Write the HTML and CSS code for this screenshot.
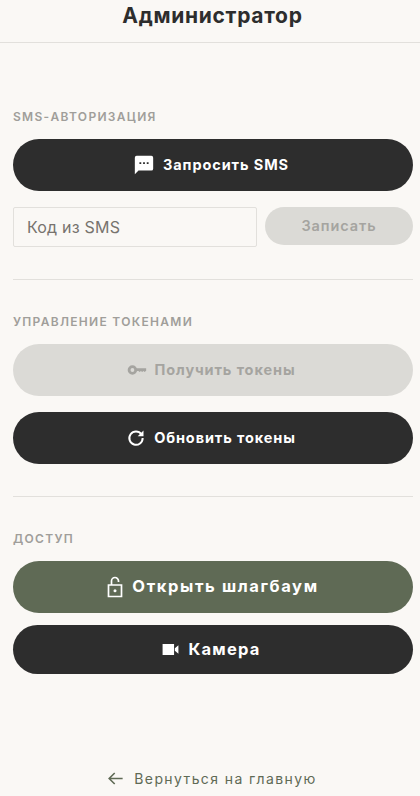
FILE: index.html
```html
<!DOCTYPE html>
<html lang="ru">
<head>
    <meta charset="UTF-8">
    <meta name="viewport" content="width=device-width, initial-scale=1.0">
    <title>Администратор</title>
    <link rel="stylesheet" href="styles.css">
</head>
<body>
    <header class="top-bar">
        <h1>Администратор</h1>
    </header>

    <main class="content">
        <section class="block">
            <h2 class="block-label">SMS-авторизация</h2>
            <button class="btn btn-dark">
                <svg class="icon icon-chat" viewBox="0 0 24 24"><path fill="currentColor" d="M20 2H4a2 2 0 0 0-2 2v18l4-4h14a2 2 0 0 0 2-2V4a2 2 0 0 0-2-2zM9 11H7V9h2v2zm4 0h-2V9h2v2zm4 0h-2V9h2v2z"/></svg>
                Запросить SMS
            </button>
            <div class="code-row">
                <input class="code-input" type="text" placeholder="Код из SMS">
                <button class="btn btn-write" disabled>Записать</button>
            </div>
        </section>

        <section class="block">
            <h2 class="block-label">Управление токенами</h2>
            <button class="btn btn-disabled" disabled>
                <svg class="icon icon-key" viewBox="0 0 24 24"><circle cx="6.500" cy="12" r="4" fill="none" stroke="currentColor" stroke-width="3.400"/><path fill="currentColor" d="M11 10h12v2.800l-1.800 1.700-1.500-1.400-1.500 1.400-1.500-1.400-1.500 1.400-1.500-1.400H11z"/></svg>
                Получить токены
            </button>
            <button class="btn btn-dark">
                <svg class="icon icon-refresh" viewBox="0 0 24 24"><path fill="none" stroke="currentColor" stroke-width="2.400" d="M18.500 7.500A8 8 0 1 0 20 12"/><path fill="currentColor" d="M21 3v7h-7z"/></svg>
                Обновить токены
            </button>
        </section>

        <section class="block block-access">
            <h2 class="block-label">Доступ</h2>
            <button class="btn btn-green btn-large">
                <svg class="icon icon-lock" viewBox="0 0 24 24"><path fill="none" stroke="currentColor" stroke-width="1.700" d="M5.500 10h13v11.500h-13zM8.500 10V6a3.500 3.500 0 0 1 7 0v1"/><circle cx="12" cy="15.700" r="1.500" fill="currentColor"/></svg>
                Открыть шлагбаум
            </button>
            <button class="btn btn-dark btn-large btn-camera">
                <svg class="icon icon-camera" viewBox="0 0 24 24"><path fill="currentColor" d="M2 5h14.500v14H2zM17.500 10.500 22 6.500v11l-4.500-4z"/></svg>
                Камера
            </button>
        </section>
    </main>

    <footer class="back">
        <a href="#" class="back-link">
            <svg class="icon" viewBox="0 0 24 24"><path fill="none" stroke="currentColor" stroke-width="2" d="M21 12H4M11 5l-7 7 7 7"/></svg>
            Вернуться на главную
        </a>
    </footer>
</body>
</html>
```

FILE: styles.css
```css
* {
    box-sizing: border-box;
}

body {
    font-family: 'Inter', 'Liberation Sans', sans-serif;
    margin: 0;
    height: 796px;
    overflow: hidden;
    display: flex;
    flex-direction: column;
    background-color: #faf8f5;
    color: #2d2d2d;
}

.top-bar {
    height: 43px;
    padding-left: 5px;
    border-bottom: 1px solid #e2e0dc;
    text-align: center;
}

.top-bar h1 {
    margin: 0;
    font-size: 21px;
    line-height: 32px;
    font-weight: 700;
    letter-spacing: 0.7px;
}

.content {
    padding: 67px 7px 0 13px;
}

.block {
    display: flex;
    flex-direction: column;
    gap: 16px;
    padding-bottom: 32px;
    margin-bottom: 35px;
    border-bottom: 1px solid #e2e0dc;
}

.block-access {
    gap: 12px;
    border-bottom: none;
    margin-bottom: 0;
    padding-bottom: 0;
}

.block-label {
    margin: 0 0 -1px;
    height: 14px;
    font-size: 12px;
    line-height: 14px;
    font-weight: 600;
    letter-spacing: 1.3px;
    text-transform: uppercase;
    color: #a09e9a;
}

.block-access .block-label {
    margin-bottom: 3px;
}

.btn {
    display: flex;
    align-items: center;
    justify-content: center;
    gap: 8px;
    width: 100%;
    height: 52px;
    padding: 0 4px 2px 0;
    border: none;
    border-radius: 26px;
    font-family: inherit;
    font-size: 14.5px;
    font-weight: 700;
    letter-spacing: 0.9px;
    color: #fff;
}

.btn-dark {
    background-color: #2d2d2d;
}

.btn-green {
    background-color: #5f6a55;
}

.btn-disabled {
    background-color: #dbdad6;
    color: #a5a4a0;
}

.btn-large {
    font-size: 16.5px;
    letter-spacing: 1.6px;
}

.btn-camera {
    height: 49px;
    letter-spacing: 1.2px;
}

.icon {
    width: 18px;
    height: 18px;
    flex-shrink: 0;
}

.btn .icon {
    margin-top: 2px;
}

.icon-chat {
    width: 22px;
    height: 22px;
}

.icon-key,
.icon-refresh {
    width: 20px;
    height: 20px;
}

.icon-lock {
    width: 24px;
    height: 24px;
    margin-right: -3px;
}

.icon-camera {
    width: 19px;
    height: 19px;
}

.code-row {
    display: flex;
    gap: 8px;
    align-items: flex-start;
}

.code-input {
    flex: 0 0 244px;
    width: 244px;
    height: 40px;
    padding: 0 13px;
    border: 1px solid #e2e0dc;
    background-color: #faf8f5;
    font-family: inherit;
    font-size: 16px;
    letter-spacing: 0.2px;
    border-radius: 2px;
}

.code-input::placeholder {
    color: #77736e;
    opacity: 1;
}

.btn-write {
    flex: 1;
    height: 38px;
    padding-right: 0;
    border-radius: 19px;
    background-color: #dbdad6;
    color: #a5a4a0;
    font-weight: 600;
}

.back {
    margin-top: auto;
    padding-bottom: 4px;
    text-align: center;
}

.back-link {
    display: inline-flex;
    align-items: center;
    gap: 9px;
    margin-left: 3px;
    font-size: 14px;
    line-height: 22px;
    letter-spacing: 1.4px;
    text-decoration: none;
    color: #5f6a55;
}

.back-link .icon {
    width: 19px;
    height: 19px;
}
```
